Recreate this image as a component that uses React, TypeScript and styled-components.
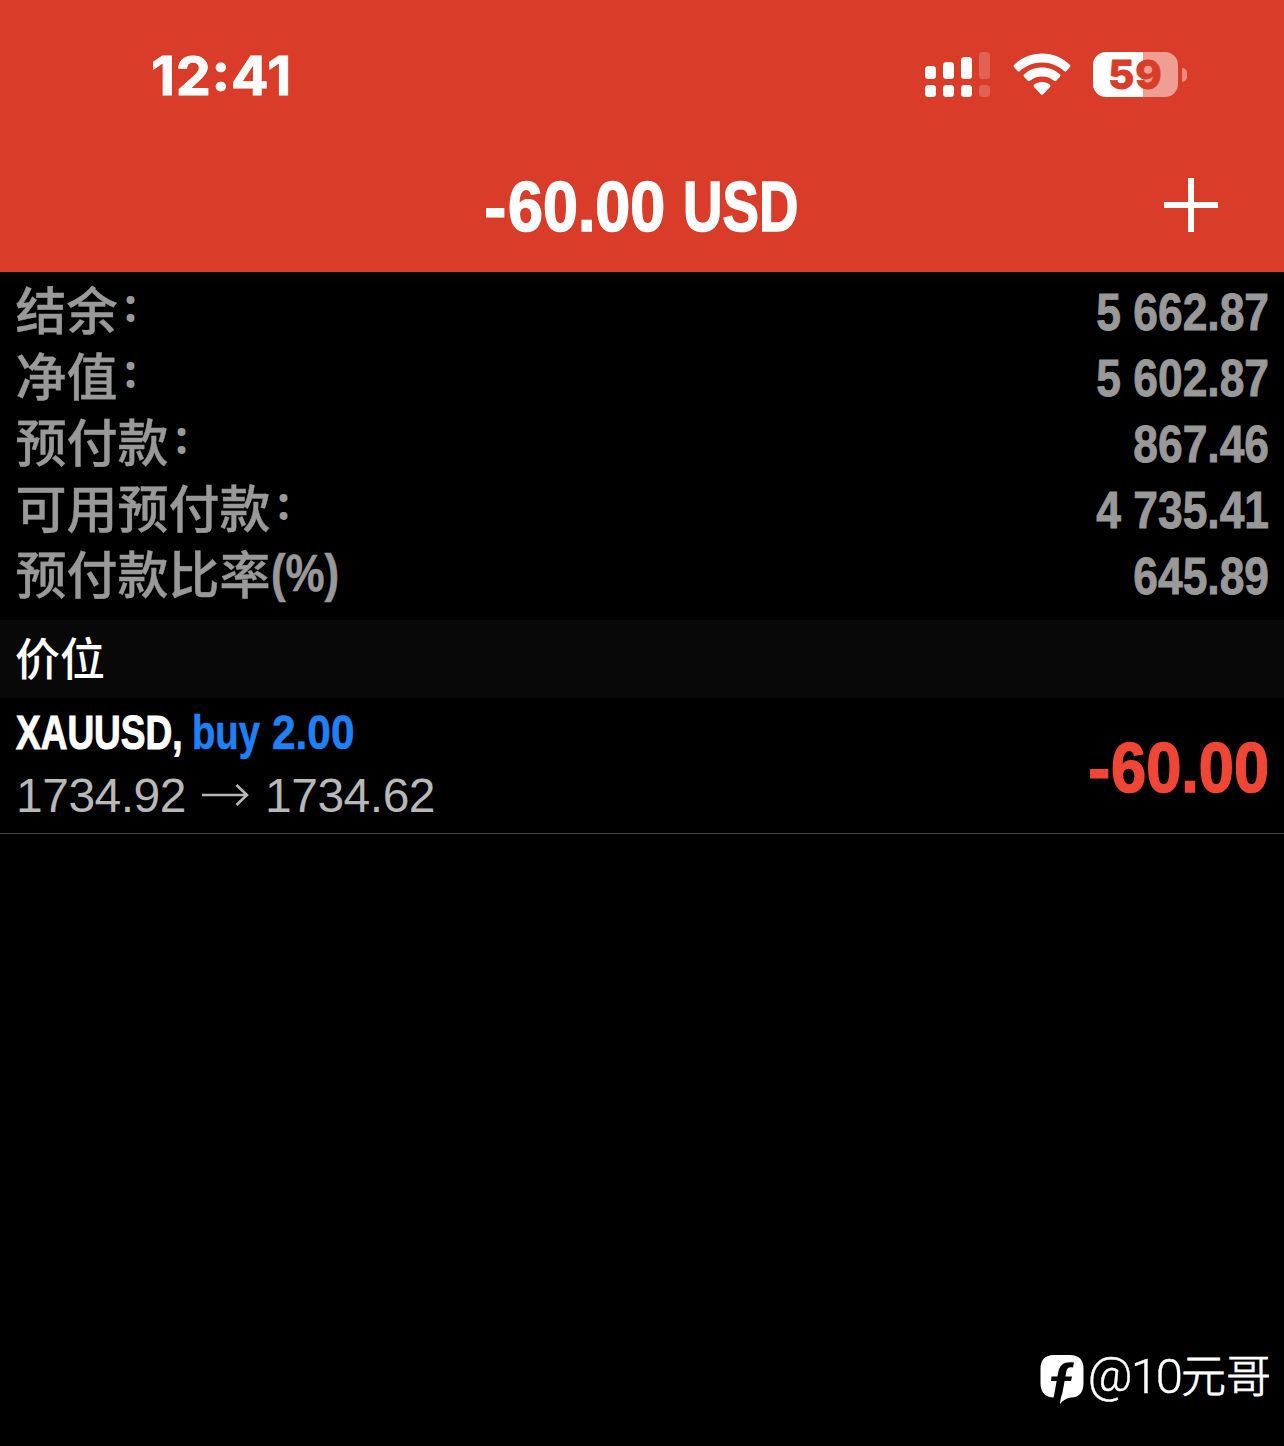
import React from "react";
import styled, { createGlobalStyle } from "styled-components";

const Global = createGlobalStyle`
  * { box-sizing: border-box; }
  html, body { margin: 0; background: #000; }
`;

const latin = `"Liberation Sans", Arial, "Noto Sans CJK SC", sans-serif`;
const cjk = `"Noto Sans CJK SC", sans-serif`;

const Screen = styled.div`
  width: 1284px;
  height: 1446px;
  display: flex;
  flex-direction: column;
  background: #000;
  overflow: hidden;
  font-family: ${latin};
`;

const Header = styled.header`
  height: 272px;
  flex: none;
  display: flex;
  flex-direction: column;
  background: #d93c29;
  color: #fff;
`;

const StatusBar = styled.div`
  height: 138px;
  display: flex;
  justify-content: space-between;
  align-items: flex-start;
  padding: 44px 97px 0 151px;
`;

const Clock = styled.div`
  font: 700 53px/64px Inter, sans-serif;
  letter-spacing: 0.6px;
  -webkit-text-stroke: 0.8px #fff;
  transform: scaleX(1.055);
  transform-origin: left center;
`;

const ClockColon = styled.span`
  display: inline-block;
  line-height: 56px;
  vertical-align: 4px;
`;

const Indicators = styled.div`
  display: flex;
  align-items: center;
  padding-top: 8px;
  height: 53px;
`;

const Battery = styled.div`
  display: flex;
  align-items: center;
  gap: 4px;
  margin-left: 22px;
`;

const BatteryBody = styled.div`
  width: 85px;
  height: 45px;
  border-radius: 13px;
  background: linear-gradient(90deg, #fff 0 50px, #f09d94 50px);
  color: #d93c29;
  text-align: center;
  font: 800 40px/45px Inter, sans-serif;
  letter-spacing: 1px;
  -webkit-text-stroke: 0.8px #d93c29;
`;

const BatteryTip = styled.div`
  width: 5px;
  height: 14px;
  border-radius: 0 7px 7px 0;
  background: #ec8a80;
`;

const TitleBar = styled.div`
  flex: 1;
  display: grid;
  grid-template-columns: 1fr 316px 1fr;
  align-items: center;
`;

const Title = styled.h1`
  grid-column: 2;
  display: flex;
  margin: 0;
  padding-top: 4px;
  line-height: 130px;
`;

const AddButton = styled.button`
  justify-self: end;
  margin: 0 66px 0 0;
  padding: 0;
  border: 0;
  background: none;
  width: 54px;
  height: 54px;
  svg { display: block; }
`;

const Condensed = styled.span<{ $size: number; $scale: number; $width: number; $color?: string; $end?: boolean; $stroke?: number }>`
  display: flex;
  justify-content: ${(p) => (p.$end ? "flex-end" : "flex-start")};
  width: ${(p) => p.$width}px;
  font-family: ${latin};
  font-size: ${(p) => p.$size}px;
  font-weight: 700;
  white-space: pre;
  color: ${(p) => p.$color ?? "inherit"};
  -webkit-text-stroke: ${(p) => p.$stroke ?? 0.6}px currentColor;
  transform: scaleX(${(p) => p.$scale});
  transform-origin: ${(p) => (p.$end ? "right" : "left")} center;
`;

const Summary = styled.section`
  height: 348px;
  flex: none;
  padding: 7px 15px 0 15.5px;
  color: #999;
`;

const SummaryRow = styled.div`
  height: 66px;
  display: flex;
  justify-content: space-between;
  line-height: 67px;
`;

const Label = styled.div`
  display: flex;
  height: 58px;
  font-family: ${cjk};
  font-size: 51px;
  font-weight: 500;
  line-height: 58px;
  -webkit-text-stroke: 0.4px #999;
`;

const Suffix = styled.div`
  line-height: 62px;
`;

const Colon = styled.span`
  width: 51px;
  padding-left: 4px;
  font-size: 36px;
  line-height: 53px;
  -webkit-text-stroke: 1.8px #999;
`;

const Section = styled.h2`
  height: 78px;
  flex: none;
  margin: 0;
  padding: 0 15px;
  background: #080808;
  color: #fff;
  font: 500 45px/74px ${cjk};
`;

const Position = styled.div`
  height: 136px;
  flex: none;
  display: flex;
  justify-content: space-between;
  padding: 0 15px 0 16px;
  border-bottom: 1px solid #444;
`;

const Details = styled.div`
  display: flex;
  flex-direction: column;
  padding-top: 3px;
`;

const Order = styled.div`
  display: flex;
  color: #fff;
  line-height: 62px;
`;

const Prices = styled.div`
  display: flex;
  align-items: center;
  color: #b8b8b8;
  font-size: 48px;
  line-height: 66px;
  letter-spacing: -0.5px;
  svg { margin: 0 16px 3px; }
`;

const Profit = styled.div`
  line-height: 139px;
  display: flex;
`;

const Watermark = styled.footer`
  margin-top: auto;
  height: 106px;
  display: flex;
  justify-content: flex-end;
  padding: 14px 13px 0 0;
  color: #fff;
  svg { margin-right: 4px; flex: none; }
`;

const Handle = styled.span`
  display: flex;
  font: 300 49px/46px Roboto, sans-serif;
  letter-spacing: -2px;
  -webkit-text-stroke: 0.4px #fff;
`;

const At = styled.span`
  line-height: 41px;
`;

const Name = styled.span`
  font: 300 45px/40px ${cjk};
  letter-spacing: 0;
  -webkit-text-stroke: 0.8px #fff;
`;

const SignalIcon = () => (
  <svg width="66" height="45" viewBox="0 0 66 45" fill="#fff">
    <rect x="0" y="14" width="11" height="13" rx="3.5" />
    <rect x="18" y="10" width="11" height="17" rx="3.5" />
    <rect x="36" y="5" width="11" height="22" rx="3.5" />
    <rect x="54" y="0" width="11" height="27" rx="3.5" opacity=".2" />
    <rect x="0" y="33" width="11" height="12" rx="3.5" />
    <rect x="18" y="33" width="11" height="12" rx="3.5" />
    <rect x="36" y="33" width="11" height="12" rx="3.5" />
    <rect x="54" y="33" width="11" height="12" rx="3.5" opacity=".2" />
  </svg>
);

const WifiSvg = styled.svg`
  margin-left: 22px;
`;

const WifiIcon = () => (
  <WifiSvg width="58" height="43" viewBox="0 0 58 43" fill="#fff">
    <path d="M29 .5C18 .5 8 4.900 1 11.900Q0 13 1 14.100L4.600 18Q5.700 19 6.900 18C12.900 12.400 20.500 9.400 29 9.400S45.100 12.400 51.100 18Q52.300 19 53.400 18L57 14.100Q58 13 57 11.900C50 4.900 40 .5 29 .5Z" />
    <path d="M29 14.500C22 14.500 15.700 17.100 11 21.500Q10 22.500 11 23.700L14.800 27.700Q15.900 28.600 17 27.700C20.300 24.800 24.300 23.400 29 23.400S37.700 24.800 41 27.700Q42.100 28.600 43.200 27.700L47 23.700Q48 22.500 47 21.500C42.300 17.100 36 14.500 29 14.500Z" />
    <path d="M29 29C26 29 23.200 30 21 31.700Q20 32.800 21 34L28 41.400Q29 42.300 30 41.400L37 34Q38 32.800 37 31.700C34.800 30 32 29 29 29Z" />
  </WifiSvg>
);

const BrandIcon = () => (
  <svg width="44" height="50" viewBox="0 0 44 50">
    <path d="M14 1H30Q43.500 1 43.500 15V29Q43.500 43 31 43.500Q24 44.500 20 50L18.500 43.500H14Q.5 43 .5 29V15Q.5 1 14 1Z" fill="#fff" />
    <path d="M33 13.500C28.500 12.500 26.800 14.500 26.200 18L22.600 38Q20.800 43 19.800 50L13.500 44.500L18.300 18C19.800 10 25 7 34 8.500Z" fill="#000" />
    <path d="M11.500 22.500H32L31 27H11Z" fill="#000" />
  </svg>
);

const summary = [
  { label: "结余", colon: true, value: "5 662.87" },
  { label: "净值", colon: true, value: "5 602.87" },
  { label: "预付款", colon: true, value: "867.46" },
  { label: "可用预付款", colon: true, value: "4 735.41" },
  { label: "预付款比率", suffix: "(%)", value: "645.89" },
];

export default function App() {
  return (
    <>
      <Global />
      <Screen>
        <Header>
          <StatusBar>
            <Clock>12<ClockColon>:</ClockColon>41</Clock>
            <Indicators>
              <SignalIcon />
              <WifiIcon />
              <Battery>
                <BatteryBody>59</BatteryBody>
                <BatteryTip />
              </Battery>
            </Indicators>
          </StatusBar>
          <TitleBar>
            <Title>
              <Condensed $size={71} $scale={0.95} $width={24} $stroke={1.2}>-</Condensed>
              <Condensed $size={71} $scale={0.885} $width={175} $stroke={1.6}>60.00</Condensed>
              <Condensed $size={71} $scale={0.77} $width={117} $stroke={1.6}>USD</Condensed>
            </Title>
            <AddButton aria-label="Add">
              <svg width="54" height="54" viewBox="0 0 54 54" stroke="#fff" strokeWidth="6">
                <path d="M27 0V54M0 27H54" />
              </svg>
            </AddButton>
          </TitleBar>
        </Header>
        <Summary>
          {summary.map((row) => (
            <SummaryRow key={row.label}>
              <Label>
                {row.label}
                {row.colon && <Colon>：</Colon>}
                {row.suffix && (
                  <Suffix>
                    <Condensed $size={51} $scale={0.86} $width={70}>{row.suffix}</Condensed>
                  </Suffix>
                )}
              </Label>
              <Condensed $size={51} $scale={0.87} $width={200} $stroke={0.9} $end>{row.value}</Condensed>
            </SummaryRow>
          ))}
        </Summary>
        <Section>价位</Section>
        <Position>
          <Details>
            <Order>
              <Condensed $size={49} $scale={0.755} $width={176} $stroke={1.1}>XAUUSD,</Condensed>
              <Condensed $size={49} $scale={0.78} $width={80} $color="#2080f5">buy</Condensed>
              <Condensed $size={49} $scale={0.865} $width={90} $color="#2080f5">2.00</Condensed>
            </Order>
            <Prices>
              <span>1734.92</span>
              <svg width="47" height="22" viewBox="0 0 47 22" fill="none" stroke="#b8b8b8" strokeWidth="2.600">
                <path d="M0 11H45M34.500 1L45 11L34.500 21" />
              </svg>
              <span>1734.62</span>
            </Prices>
          </Details>
          <Profit>
            <Condensed $size={71} $scale={0.95} $width={23} $stroke={1.2} $color="#ef4636">-</Condensed>
            <Condensed $size={71} $scale={0.89} $width={158} $stroke={1.6} $color="#ef4636">60.00</Condensed>
          </Profit>
        </Position>
        <Watermark>
          <BrandIcon />
          <Handle>
            <At>@</At>10<Name>元哥</Name>
          </Handle>
        </Watermark>
      </Screen>
    </>
  );
}
